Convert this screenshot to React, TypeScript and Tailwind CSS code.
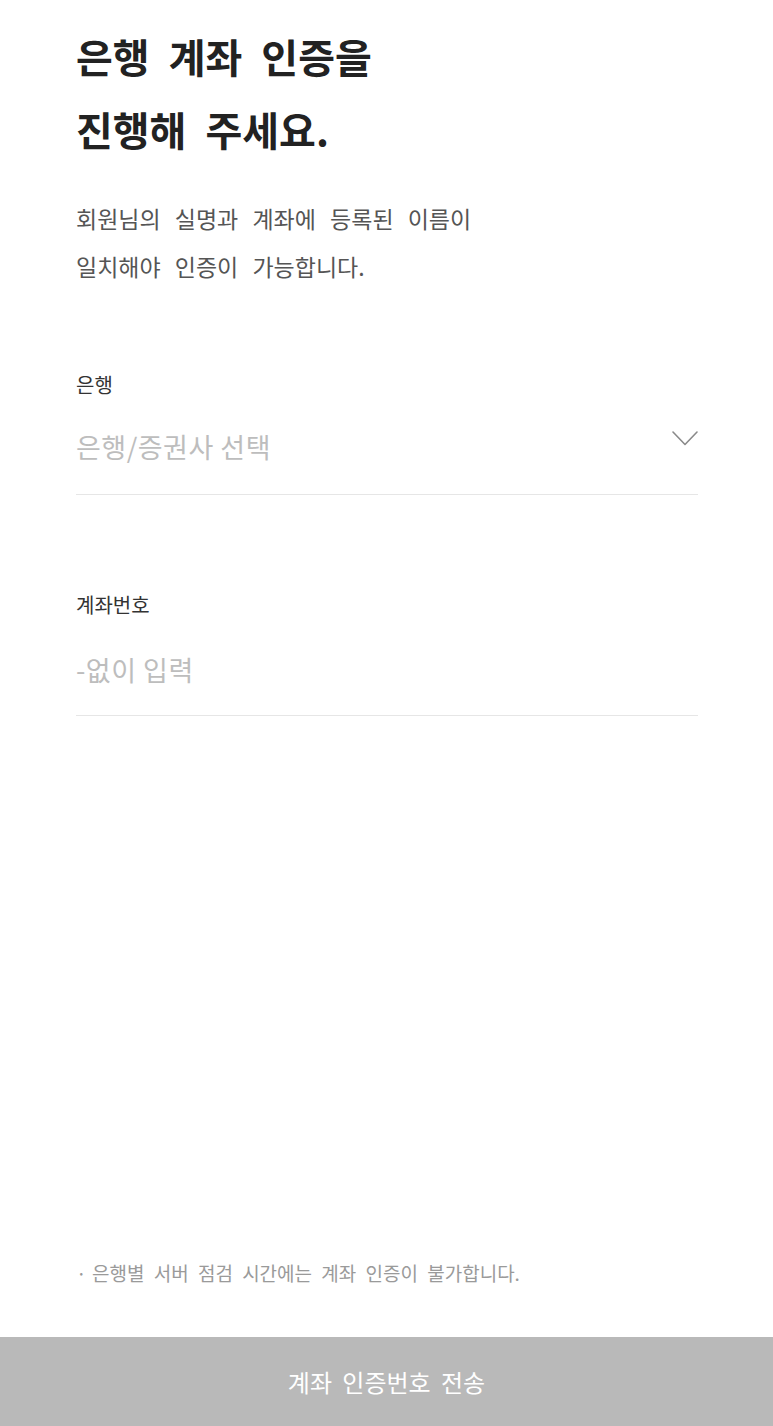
import React from "react";

const font = { fontFamily: '"Noto Sans CJK KR", "Noto Sans", sans-serif' };

function Chevron() {
  return (
    <svg width="26" height="15" viewBox="0 0 26 15" fill="none" className="shrink-0">
      <path d="M1 1L13 13.5L25 1" stroke="#8a8a8a" strokeWidth="1.6" strokeLinecap="round" strokeLinejoin="round" />
    </svg>
  );
}

export default function App() {
  return (
    <div
      className="min-h-screen h-[1426px] w-full bg-white flex flex-col font-['Noto_Sans_CJK_KR',_'Noto_Sans',_sans-serif]"
      style={font}
    >
      <div className="px-[76px] pt-[20px] flex flex-col">
        <h1 className="text-[40px] leading-[73px] font-semibold text-[#222222] [word-spacing:10px]">
          은행 계좌 인증을
          <br />
          진행해 주세요.
        </h1>
        <p className="mt-[28px] text-[23px] leading-[48px] text-[#555555] [word-spacing:9px]">
          회원님의 실명과 계좌에 등록된 이름이
          <br />
          일치해야 인증이 가능합니다.
        </p>

        <div className="mt-[81px] flex flex-col w-[622px]">
          <label className="text-[20px] leading-[28px] text-[#333333]">은행</label>
          <div className="h-[96px] flex items-center justify-between border-b border-[#e6e6e6]">
            <span className="text-[27px] tracking-[0.5px] text-[#bdbdbd] mt-[2px]">은행/증권사 선택</span>
            <div className="self-start mt-[32px]">
              <Chevron />
            </div>
          </div>

          <label className="mt-[96px] text-[20px] leading-[28px] text-[#333333]">계좌번호</label>
          <div className="h-[97px] flex items-center border-b border-[#e6e6e6]">
            <span className="text-[27px] tracking-[0.5px] text-[#bdbdbd] mt-[6px]">-없이 입력</span>
          </div>
        </div>
      </div>

      <div className="mt-auto px-[76px] mb-[51px] flex items-center text-[19px] leading-[26px] text-[#9a9a9a]">
        <span className="w-[16px] shrink-0">·</span>
        <span className="[word-spacing:5px]">은행별 서버 점검 시간에는 계좌 인증이 불가합니다.</span>
      </div>

      <button className="h-[89px] w-full shrink-0 bg-[#b9b9b9] text-white text-[24px] flex items-center justify-center [word-spacing:5px]">
        계좌 인증번호 전송
      </button>
    </div>
  );
}
